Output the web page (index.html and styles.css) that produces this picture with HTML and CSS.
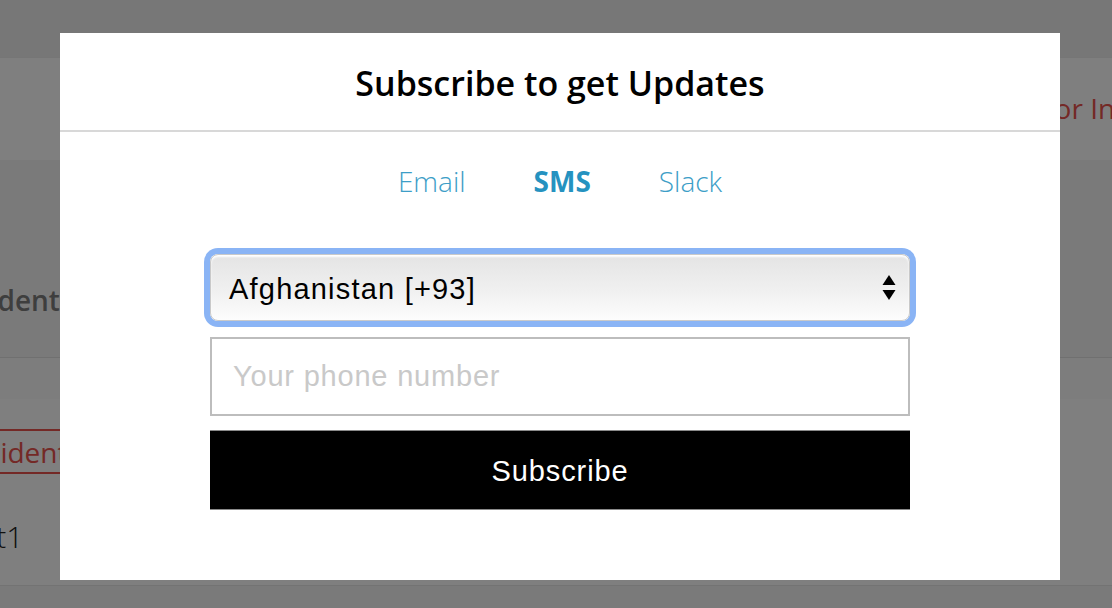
FILE: index.html
```html
<!DOCTYPE html>
<html lang="en">
  <head>
    <title>Status - Subscribe</title>
    <link rel="stylesheet" href="styles.css">
  </head>
  <body>
    <div class="page">
      <div class="topbar"></div>
      <div class="nav">
        <a class="nav-link">Subscribe for Incidents</a>
      </div>
      <div class="intro">
        <h2 class="intro-title">Past Incidents</h2>
      </div>
      <div class="band"></div>
      <div class="list">
        <span class="tag">Incident</span>
        <p class="item">Test1</p>
      </div>
      <div class="foot"></div>
    </div>

    <div class="overlay">
      <div class="modal">
        <div class="modal-head">
          <h1 class="modal-title">Subscribe to get Updates</h1>
        </div>
        <div class="modal-body">
          <div class="tabs">
            <span class="tab">Email</span>
            <span class="tab active">SMS</span>
            <span class="tab">Slack</span>
          </div>
          <div class="form">
            <div class="select">
              <span class="select-text">Afghanistan [+93]</span>
              <svg class="select-arrows" width="14" height="28" viewBox="0 0 14 28">
                <polygon points="7,1 13.5,11 0.5,11" fill="#000"/>
                <polygon points="0.5,16 13.5,16 7,26" fill="#000"/>
              </svg>
            </div>
            <input class="phone" type="text" placeholder="Your phone number">
            <button class="submit">Subscribe</button>
          </div>
        </div>
      </div>
    </div>
  </body>
</html>
```

FILE: styles.css
```css
* {
  box-sizing: border-box;
}
body {
  margin: 0;
  font-family: "Open Sans", sans-serif;
  overflow: hidden;
  background: #ffffff;
}

/* ---- page behind the modal ---- */
.topbar {
  height: 58px;
  background-color: #efefef;
}
.nav {
  height: 102px;
  background-color: #ffffff;
  box-shadow: 0 2px 4px rgba(0, 0, 0, 0.12);
  display: flex;
  align-items: center;
  justify-content: flex-end;
}
.nav-link {
  font-size: 28px;
  color: #e8524d;
  white-space: nowrap;
  margin-right: -97px;
  padding-bottom: 2px;
}
.intro {
  height: 198px;
  background-color: #f5f5f5;
  border-bottom: 1px solid #e0e0e0;
  display: flex;
  align-items: flex-end;
}
.intro-title {
  margin: 0 0 38px -116px;
  font-size: 28px;
  font-weight: 600;
  color: #7c7c7c;
  white-space: nowrap;
}
.band {
  height: 41px;
  background-color: #fafafa;
}
.list {
  height: 187px;
  background-color: #ffffff;
  border-bottom: 1px solid #e6e6e6;
  padding-top: 30px;
}
.tag {
  display: inline-block;
  margin-left: -54px;
  padding: 0 14px;
  height: 45px;
  line-height: 43px;
  border: 2px solid #e8524d;
  color: #e8524d;
  font-size: 28px;
}
.item {
  margin: 42px 0 0 -50px;
  font-size: 30px;
  font-weight: 300;
  color: #222;
}
.foot {
  height: 30px;
  background-color: #f4f4f4;
}

/* ---- modal ---- */
.overlay {
  position: fixed;
  inset: 0;
  background-color: rgba(0, 0, 0, 0.5);
}
.modal {
  margin: 33px 0 0 60px;
  width: 1000px;
  height: 547px;
  background-color: #ffffff;
}
.modal-head {
  height: 99px;
  border-bottom: 2px solid #d8d8d8;
  display: flex;
  align-items: center;
  justify-content: center;
}
.modal-title {
  margin: 0;
  font-size: 34px;
  font-weight: 600;
  color: #000;
  padding-top: 2px;
}
.modal-body {
  padding-top: 29px;
}
.tabs {
  display: flex;
  justify-content: center;
  gap: 68px;
  height: 40px;
  align-items: center;
}
.tab {
  font-size: 28px;
  font-weight: 300;
  color: #3d9ec7;
}
.tab.active {
  font-weight: 700;
  color: #2592c0;
}
.form {
  width: 700px;
  margin: 53px auto 0;
  display: flex;
  flex-direction: column;
}
.select {
  height: 67px;
  border-radius: 8px;
  border: 1px solid #c9c9c9;
  background: linear-gradient(#e4e4e4, #f0f0f0 55%, #fdfdfd);
  box-shadow: 0 0 0 6px #8ab4f5, inset 0 2px 2px #ffffff;
  display: flex;
  align-items: center;
  justify-content: space-between;
  padding: 0 13px 0 18px;
}
.select-text {
  font-family: "Liberation Sans", Arial, sans-serif;
  font-size: 29px;
  letter-spacing: 1.2px;
  color: #000;
  padding-top: 3px;
}
.phone {
  margin-top: 16px;
  height: 79px;
  border: 2px solid #bdbdbd;
  padding: 0 21px;
  font-family: "Liberation Sans", Arial, sans-serif;
  font-size: 29px;
  letter-spacing: 0.8px;
  outline: none;
}
.phone::placeholder {
  color: #c9c9c9;
}
.submit {
  margin-top: 14px;
  height: 80px;
  border: none;
  border-top: 1px solid #8a8a8a;
  border-bottom: 1px solid #8a8a8a;
  background-color: #000;
  color: #fff;
  font-family: "Liberation Sans", Arial, sans-serif;
  font-size: 29px;
  letter-spacing: 0.9px;
  padding-top: 3px;
}
```
